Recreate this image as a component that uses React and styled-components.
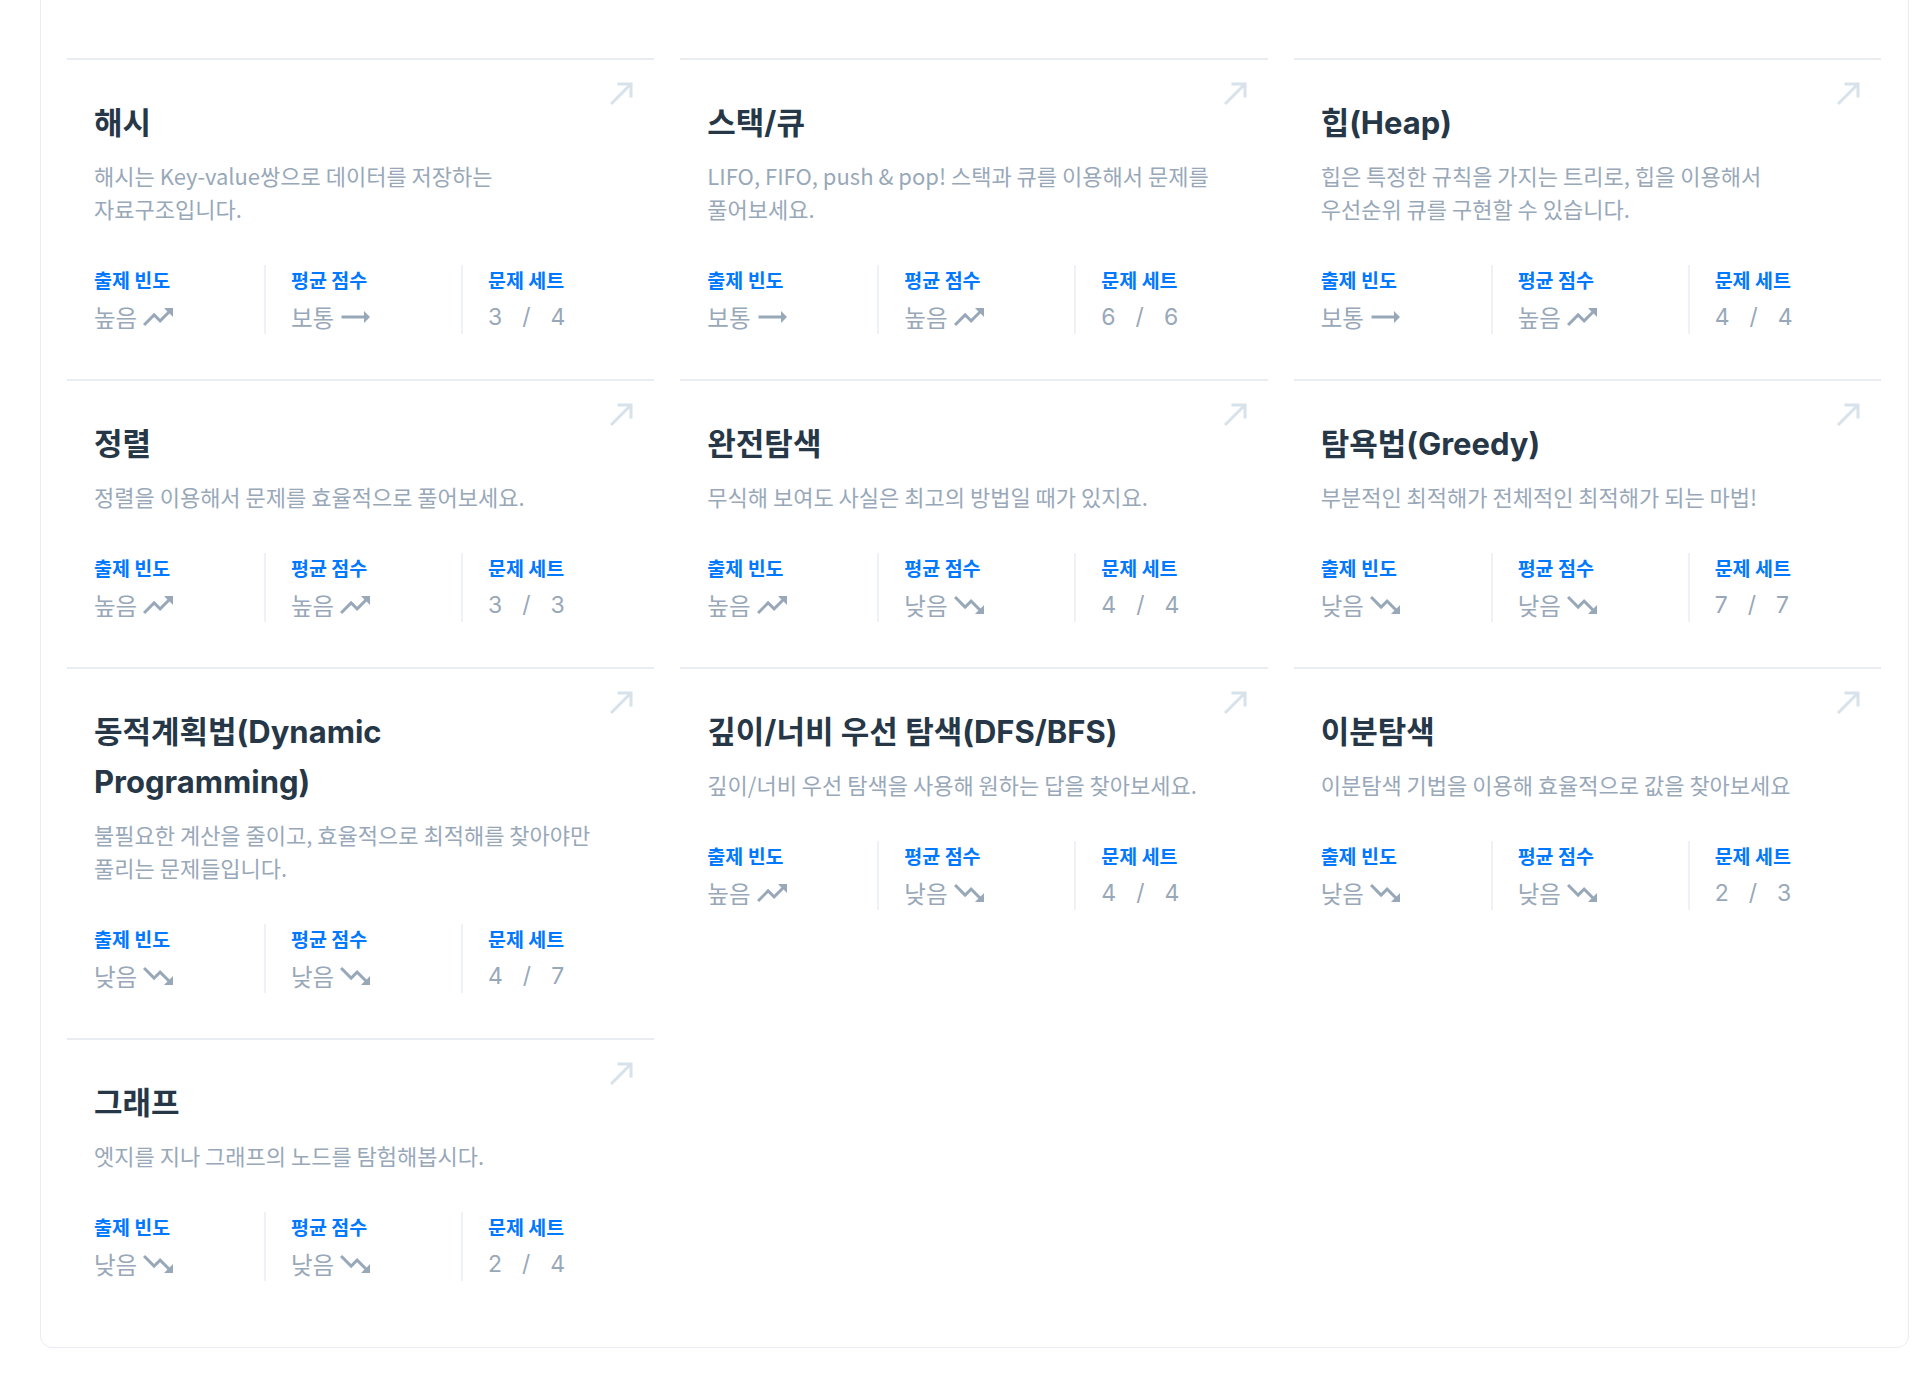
import React from 'react';
import styled, { createGlobalStyle } from 'styled-components';
import { MdCallMade, MdTrendingUp, MdTrendingFlat, MdTrendingDown } from 'react-icons/md';

const GlobalStyle = createGlobalStyle`
    body {
        margin: 0;
        background: #ffffff;
        font-family: "Noto Sans CJK KR", "Noto Sans", sans-serif;
    }
`;

const Panel = styled.div`
    margin: -20px 11px 0 40px;
    padding: 77px 27px 21px 26px;
    border: 1px solid #e9edf2;
    border-radius: 12px;
`;

const Grid = styled.div`
    display: grid;
    grid-template-columns: repeat(3, minmax(0, 1fr));
    column-gap: 26px;
`;

const Card = styled.div`
    position: relative;
    border-top: 2px solid #e9edf2;
    padding: 38px 27px 45px;
`;

const Corner = styled.span`
    position: absolute;
    top: 15px;
    right: 14px;
    display: flex;
    color: #d7e2eb;
`;

const Title = styled.h3`
    margin: 0;
    padding-right: 60px;
    font-family: Inter, "Noto Sans CJK KR", sans-serif;
    font-size: 31px;
    font-weight: 700;
    line-height: 50px;
    color: #263747;
    word-break: keep-all;
`;

const Desc = styled.p`
    margin: 11px 0 0;
    padding-right: 14px;
    font-size: 22px;
    line-height: 33px;
    color: #98a8b9;
    word-break: keep-all;
`;

const Stats = styled.div`
    display: flex;
    margin-top: 40px;
`;

const Stat = styled.div`
    flex: 0 0 170px;
    & + & {
        border-left: 2px solid #eef1f5;
        padding-left: 25px;
    }
    &:last-child {
        flex: 1 1 auto;
    }
`;

const Label = styled.div`
    font-size: 19.5px;
    font-weight: 700;
    line-height: 30px;
    color: #0078ff;
`;

const Value = styled.div`
    display: flex;
    align-items: center;
    height: 34px;
    margin-top: 5px;
    font-size: 23.5px;
    color: #98a8b9;
    svg {
        margin-left: 3px;
    }
`;

const Fraction = styled(Value)`
    gap: 20px;
    font-family: Inter, "Noto Sans CJK KR", sans-serif;
    font-size: 23px;
`;

const trends = {
    '높음': MdTrendingUp,
    '보통': MdTrendingFlat,
    '낮음': MdTrendingDown,
};

const Trend = ({ level }) => {
    const Icon = trends[level];
    return (
        <Value>
            { level }
            <Icon size={ 36 }/>
        </Value>
    );
};

const kits = [
    { title: '해시', desc: '해시는 Key-value쌍으로 데이터를 저장하는 자료구조입니다.', freq: '높음', score: '보통', solved: 3, total: 4 },
    { title: '스택/큐', desc: 'LIFO, FIFO, push & pop! 스택과 큐를 이용해서 문제를 풀어보세요.', freq: '보통', score: '높음', solved: 6, total: 6 },
    { title: '힙(Heap)', desc: '힙은 특정한 규칙을 가지는 트리로, 힙을 이용해서 우선순위 큐를 구현할 수 있습니다.', freq: '보통', score: '높음', solved: 4, total: 4 },
    { title: '정렬', desc: '정렬을 이용해서 문제를 효율적으로 풀어보세요.', freq: '높음', score: '높음', solved: 3, total: 3 },
    { title: '완전탐색', desc: '무식해 보여도 사실은 최고의 방법일 때가 있지요.', freq: '높음', score: '낮음', solved: 4, total: 4 },
    { title: '탐욕법(Greedy)', desc: '부분적인 최적해가 전체적인 최적해가 되는 마법!', freq: '낮음', score: '낮음', solved: 7, total: 7 },
    { title: '동적계획법(Dynamic Programming)', desc: '불필요한 계산을 줄이고, 효율적으로 최적해를 찾아야만 풀리는 문제들입니다.', freq: '낮음', score: '낮음', solved: 4, total: 7 },
    { title: '깊이/너비 우선 탐색(DFS/BFS)', desc: '깊이/너비 우선 탐색을 사용해 원하는 답을 찾아보세요.', freq: '높음', score: '낮음', solved: 4, total: 4 },
    { title: '이분탐색', desc: '이분탐색 기법을 이용해 효율적으로 값을 찾아보세요', freq: '낮음', score: '낮음', solved: 2, total: 3 },
    { title: '그래프', desc: '엣지를 지나 그래프의 노드를 탐험해봅시다.', freq: '낮음', score: '낮음', solved: 2, total: 4 },
];

export default function App() {
    return (
        <>
            <GlobalStyle/>
            <Panel>
                <Grid>
                    { kits.map( (kit) =>
                        <Card key={ kit.title }>
                            <Corner><MdCallMade size={ 36 }/></Corner>
                            <Title>{ kit.title }</Title>
                            <Desc>{ kit.desc }</Desc>
                            <Stats>
                                <Stat>
                                    <Label>출제 빈도</Label>
                                    <Trend level={ kit.freq }/>
                                </Stat>
                                <Stat>
                                    <Label>평균 점수</Label>
                                    <Trend level={ kit.score }/>
                                </Stat>
                                <Stat>
                                    <Label>문제 세트</Label>
                                    <Fraction>
                                        <span>{ kit.solved }</span>
                                        <span>/</span>
                                        <span>{ kit.total }</span>
                                    </Fraction>
                                </Stat>
                            </Stats>
                        </Card>
                    ) }
                </Grid>
            </Panel>
        </>
    );
}
